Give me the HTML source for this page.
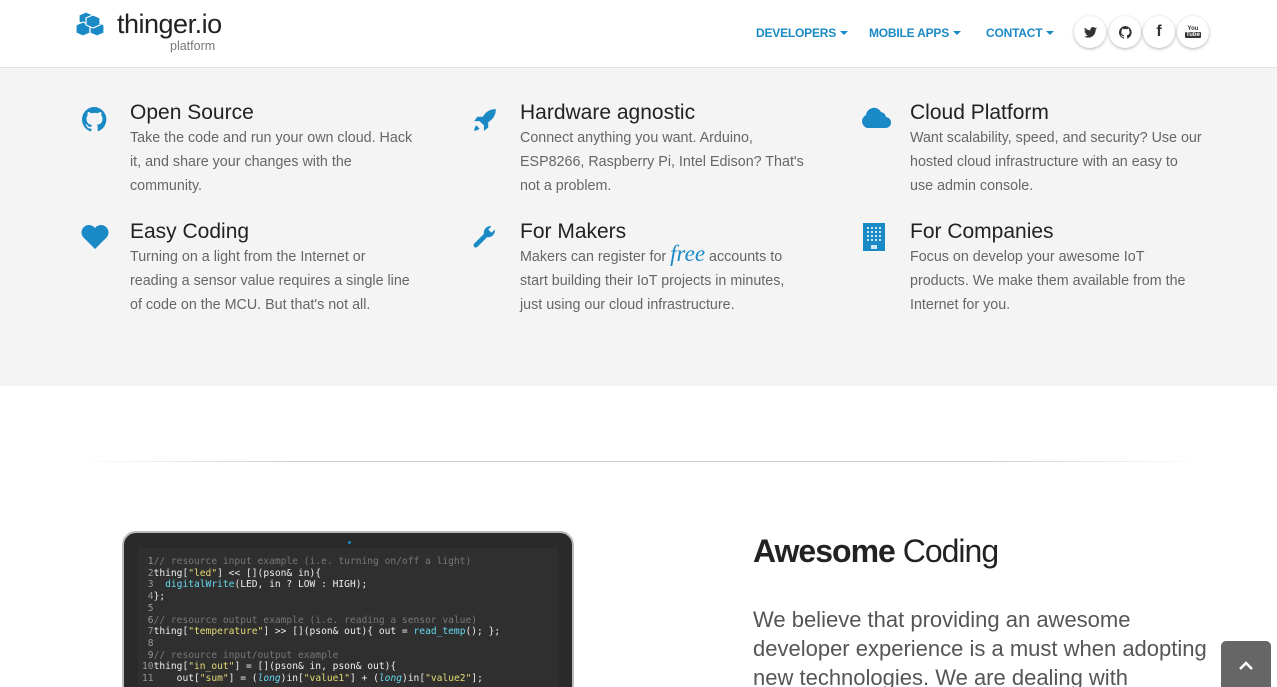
<!DOCTYPE html>
<html><head><meta charset="utf-8"><style>
*{margin:0;padding:0;box-sizing:border-box}
html,body{width:1277px;height:687px;overflow:hidden}
body{font-family:"Liberation Sans",sans-serif;background:#fff;position:relative}
.hdr{position:absolute;left:0;top:0;width:1277px;height:68px;background:#fff;border-bottom:1px solid #e2e2e2;box-shadow:0 1px 3px rgba(0,0,0,.06)}
.logo{position:absolute;left:75px;top:10px}
.logo .t{position:absolute;left:42px;top:-1px;font-size:27px;color:#222;letter-spacing:-0.5px}
.logo .p{position:absolute;left:95px;top:29px;font-size:12.5px;color:#777}
.nav{position:absolute;top:26px;font-size:12px;font-weight:bold;color:#1a8ac6;letter-spacing:-0.2px}
.nav:after{content:"";display:inline-block;margin-left:4px;border-left:4px solid transparent;border-right:4px solid transparent;border-top:4px solid #1a8ac6;vertical-align:2px}
.soc{position:absolute;top:16px;width:32px;height:32px;border-radius:50%;background:#fff;box-shadow:0 1px 3px rgba(0,0,0,.3);display:flex;align-items:center;justify-content:center;font-size:13px;font-weight:bold;color:#333}
.gray{position:absolute;left:0;top:68px;width:1277px;height:318px;background:#f4f4f4}
.f{position:absolute;width:330px;white-space:nowrap}
.f h3{font-weight:normal;font-size:21px;color:#222;line-height:26px}
.f p{font-size:14.3px;line-height:24px;color:#666}
.ic{position:absolute}
.hr{position:absolute;left:80px;top:461px;width:1120px;height:1px;background:linear-gradient(90deg,#fff,#ccc 20%,#ccc 80%,#fff)}
.lap{position:absolute;left:122px;top:531px;width:452px;height:170px;background:#2a2a2a;border-radius:14px;border:2px solid #bbb;overflow:hidden}
.scr{position:absolute;left:14px;top:15px;width:420px;height:160px;background:#2f2f2f;font-family:"DejaVu Sans Mono","Liberation Mono",monospace;font-size:9.6px;line-height:11.7px;color:#eee;padding:8px 0 0 4px;white-space:pre;overflow:hidden}
.c{color:#777}.s{color:#e6db74}.b{color:#66d9ef}.n{color:#999}
h2{position:absolute;left:753px;top:533px;font-size:32px;color:#222;font-weight:normal;letter-spacing:-1px}
.para{position:absolute;left:753px;top:605px;width:460px;font-size:22px;line-height:29px;color:#555}
.top{position:absolute;left:1221px;top:641px;width:50px;height:50px;background:#666;border-radius:5px 5px 0 0}
</style></head><body>
<div class="hdr">
 <div class="logo">
  <svg width="36" height="30" viewBox="0 0 36 30"><g fill="#1a8ac6" stroke="#fff" stroke-width="1.2"><path d="M11 2l7 3v7l-7 3-7-3V5z"/><path d="M8 12l7 3v8l-7 3-7-3v-8z"/><path d="M22 12l7 3v8l-7 3-7-3v-8z"/><path d="M18 5l7 3v7l-7 3-7-3V8z"/></g></svg>
  <span class="t">thinger.io</span><span class="p">platform</span>
 </div>
 <span class="nav" style="left:756px">DEVELOPERS</span>
 <span class="nav" style="left:869px">MOBILE APPS</span>
 <span class="nav" style="left:986px">CONTACT</span>
 <div class="soc" style="left:1074px"><svg width="13" height="11" viewBox="0 0 24 20"><path fill="#333" d="M24 2.4a10 10 0 01-2.8.8A5 5 0 0023.3.4a10 10 0 01-3.1 1.2A4.9 4.9 0 0011.8 6 14 14 0 011.7.9a4.9 4.9 0 001.5 6.6 4.9 4.9 0 01-2.2-.6 4.9 4.9 0 003.9 4.8 5 5 0 01-2.2.1 4.9 4.9 0 004.6 3.4A9.9 9.9 0 010 17.3 14 14 0 007.5 19.5c9.1 0 14-7.5 14-14v-.6A10 10 0 0024 2.4z"/></svg></div>
 <div class="soc" style="left:1109px"><svg width="13" height="13" viewBox="0 0 16 16"><path fill="#333" d="M8 0a8 8 0 00-2.5 15.6c.4 0 .5-.2.5-.4v-1.5c-2.2.5-2.7-1-2.7-1-.4-.9-.9-1.2-.9-1.2-.7-.5.1-.5.1-.5.8.1 1.2.8 1.2.8.7 1.300 1.9.9 2.3.7.1-.5.3-.9.5-1.1-1.8-.2-3.6-.9-3.6-4 0-.9.3-1.6.8-2.1-.1-.2-.4-1 .1-2.1 0 0 .7-.2 2.2.8a7.5 7.5 0 014 0c1.5-1 2.2-.8 2.2-.8.4 1.1.2 1.9.1 2.1.5.6.8 1.3.8 2.1 0 3.1-1.9 3.7-3.6 3.9.3.3.5.8.5 1.5v2.2c0 .2.1.5.6.4A8 8 0 008 0z"/></svg></div>
 <div class="soc" style="left:1143px;font-size:16px">f</div>
 <div class="soc" style="left:1177px;flex-direction:column;font-size:6px;line-height:6px"><span>You</span><span style="background:#333;color:#fff;padding:0 1px;border-radius:1px">Tube</span></div>
</div>
<div class="gray">
 <svg class="ic" style="left:82px;top:39px" width="25" height="25" viewBox="0 0 16 16"><path fill="#1a8ac6" d="M8 0a8 8 0 00-2.5 15.6c.4 0 .5-.2.5-.4v-1.5c-2.2.5-2.7-1-2.7-1-.4-.9-.9-1.2-.9-1.2-.7-.5.1-.5.1-.5.8.1 1.2.8 1.2.8.7 1.3 1.9.9 2.3.7.1-.5.3-.9.5-1.1-1.8-.2-3.6-.9-3.6-4 0-.9.3-1.6.8-2.1-.1-.2-.4-1 .1-2.1 0 0 .7-.2 2.2.8a7.5 7.5 0 014 0c1.5-1 2.2-.8 2.2-.8.4 1.1.2 1.9.1 2.1.5.6.8 1.3.8 2.1 0 3.1-1.9 3.7-3.6 3.9.3.3.5.8.5 1.5v2.2c0 .2.1.5.6.4A8 8 0 008 0z"/></svg>
 <div class="f" style="left:130px;top:32px"><h3>Open Source</h3><p>Take the code and run your own cloud. Hack<br>it, and share your changes with the<br>community.</p></div>
 <svg class="ic" style="left:472px;top:39px" width="26" height="26" viewBox="0 0 24 24"><path fill="#1a8ac6" d="M22 2c-5 0-9 2-12 7H5l-3 4h5l4 4v5l4-3v-5c5-3 7-7 7-12zM4 17c-2 2-2 5-2 5s3 0 5-2z"/></svg>
 <div class="f" style="left:520px;top:32px"><h3>Hardware agnostic</h3><p>Connect anything you want. Arduino,<br>ESP8266, Raspberry Pi, Intel Edison? That's<br>not a problem.</p></div>
 <svg class="ic" style="left:859px;top:37px" width="32" height="26" viewBox="0 0 32 24"><path fill="#1a8ac6" d="M8 22a7 7 0 01-1-13 8 8 0 0115-3 6 6 0 015 5 5.5 5.5 0 01-1 11z"/></svg>
 <div class="f" style="left:910px;top:32px"><h3>Cloud Platform</h3><p>Want scalability, speed, and security? Use our<br>hosted cloud infrastructure with an easy to<br>use admin console.</p></div>
 <svg class="ic" style="left:81px;top:157px" width="28" height="24" viewBox="0 0 28 24"><path fill="#1a8ac6" d="M14 24L2 12A7 7 0 0114 3a7 7 0 0112 9z"/></svg>
 <div class="f" style="left:130px;top:151px"><h3>Easy Coding</h3><p>Turning on a light from the Internet or<br>reading a sensor value requires a single line<br>of code on the MCU. But that's not all.</p></div>
 <svg class="ic" style="left:472px;top:155px" width="26" height="26" viewBox="0 0 24 24"><path fill="#1a8ac6" d="M21 6l-3 3-3-3 3-3a6 6 0 00-7 7L2 19a2 2 0 003 3l9-9a6 6 0 007-7z"/></svg>
 <div class="f" style="left:520px;top:151px"><h3>For Makers</h3><p>Makers can register for <span style="font-family:'Liberation Serif',serif;font-style:italic;color:#1a8ac6;font-size:23px;line-height:10px">free</span> accounts to<br>start building their IoT projects in minutes,<br>just using our cloud infrastructure.</p></div>
 <svg class="ic" style="left:863px;top:155px" width="22" height="28" viewBox="0 0 22 28"><rect width="22" height="28" fill="#1a8ac6"/><g fill="#cfe6f4"><rect x="4" y="4" width="2" height="2"/><rect x="8" y="4" width="2" height="2"/><rect x="12" y="4" width="2" height="2"/><rect x="16" y="4" width="2" height="2"/><rect x="4" y="8" width="2" height="2"/><rect x="8" y="8" width="2" height="2"/><rect x="12" y="8" width="2" height="2"/><rect x="16" y="8" width="2" height="2"/><rect x="4" y="12" width="2" height="2"/><rect x="8" y="12" width="2" height="2"/><rect x="12" y="12" width="2" height="2"/><rect x="16" y="12" width="2" height="2"/><rect x="4" y="16" width="2" height="2"/><rect x="8" y="16" width="2" height="2"/><rect x="12" y="16" width="2" height="2"/><rect x="16" y="16" width="2" height="2"/><rect x="8" y="22" width="6" height="4"/></g></svg>
 <div class="f" style="left:910px;top:151px"><h3>For Companies</h3><p>Focus on develop your awesome IoT<br>products. We make them available from the<br>Internet for you.</p></div>
</div>
<div class="hr"></div>
<div class="lap"><div style="position:absolute;left:224px;top:8px;width:3px;height:3px;background:#1a8ac6;border-radius:50%"></div>
<div class="scr"><span class="n"> 1</span><span class="c">// resource input example (i.e. turning on/off a light)</span>
<span class="n"> 2</span>thing[<span class="s">"led"</span>] &lt;&lt; [](pson&amp; in){
<span class="n"> 3</span>  <span class="b">digitalWrite</span>(LED, in ? LOW : HIGH);
<span class="n"> 4</span>};
<span class="n"> 5</span>
<span class="n"> 6</span><span class="c">// resource output example (i.e. reading a sensor value)</span>
<span class="n"> 7</span>thing[<span class="s">"temperature"</span>] &gt;&gt; [](pson&amp; out){ out = <span class="b">read_temp</span>(); };
<span class="n"> 8</span>
<span class="n"> 9</span><span class="c">// resource input/output example</span>
<span class="n">10</span>thing[<span class="s">"in_out"</span>] = [](pson&amp; in, pson&amp; out){
<span class="n">11</span>    out[<span class="s">"sum"</span>] = (<i class="b">long</i>)in[<span class="s">"value1"</span>] + (<i class="b">long</i>)in[<span class="s">"value2"</span>];</div></div>
<h2><b>Awesome</b> Coding</h2>
<div class="para">We believe that providing an awesome developer experience is a must when adopting new technologies. We are dealing with</div>
<div class="top"><svg style="position:absolute;left:18px;top:20px" width="14" height="9" viewBox="0 0 14 9"><path d="M1 8l6-6 6 6" stroke="#fff" stroke-width="2.5" fill="none"/></svg></div>
</body></html>
